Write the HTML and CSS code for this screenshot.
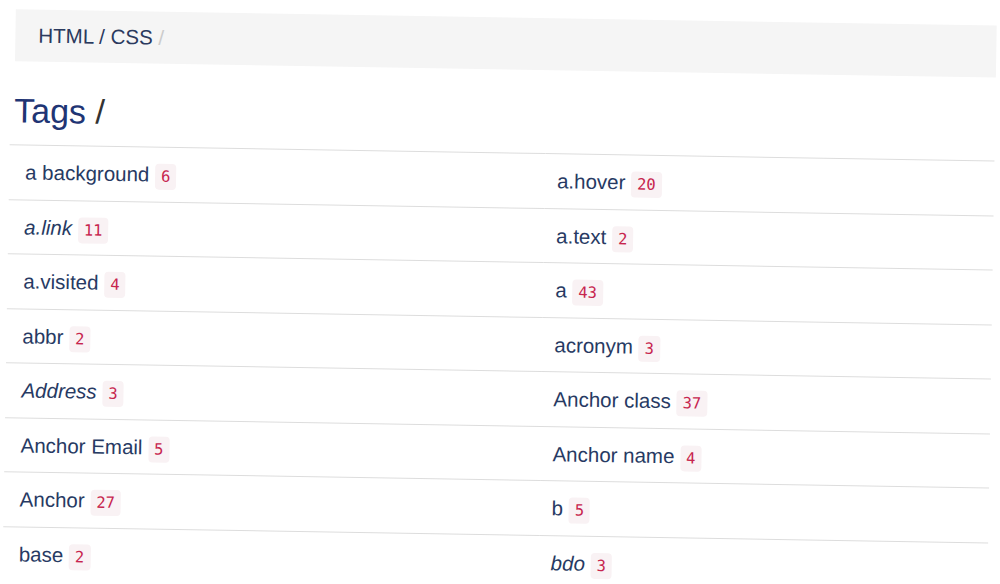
FILE: index.html
```html
<!DOCTYPE html>
<html lang="en">
<head>
<meta charset="utf-8">
<title>Tags</title>
<link rel="stylesheet" href="styles.css">
</head>
<body>
<div class="page">
  <nav class="breadcrumb">
    <a class="crumb" href="#">HTML</a> / <a class="crumb" href="#">CSS</a> <span class="sep">/</span>
  </nav>
  <h1 class="title"><span class="title-main">Tags</span> /</h1>
  <div class="tag-grid">
    <div class="tag-cell left"><a class="tag" href="#">a background</a> <code class="count">6</code></div>
    <div class="tag-cell right"><a class="tag" href="#">a.hover</a> <code class="count">20</code></div>
    <div class="tag-cell left"><a class="tag italic" href="#">a.link</a> <code class="count">11</code></div>
    <div class="tag-cell right"><a class="tag" href="#">a.text</a> <code class="count">2</code></div>
    <div class="tag-cell left"><a class="tag" href="#">a.visited</a> <code class="count">4</code></div>
    <div class="tag-cell right"><a class="tag" href="#">a</a> <code class="count">43</code></div>
    <div class="tag-cell left"><a class="tag" href="#">abbr</a> <code class="count">2</code></div>
    <div class="tag-cell right"><a class="tag" href="#">acronym</a> <code class="count">3</code></div>
    <div class="tag-cell left"><a class="tag italic" href="#">Address</a> <code class="count">3</code></div>
    <div class="tag-cell right"><a class="tag" href="#">Anchor class</a> <code class="count">37</code></div>
    <div class="tag-cell left"><a class="tag" href="#">Anchor Email</a> <code class="count">5</code></div>
    <div class="tag-cell right"><a class="tag" href="#">Anchor name</a> <code class="count">4</code></div>
    <div class="tag-cell left"><a class="tag" href="#">Anchor</a> <code class="count">27</code></div>
    <div class="tag-cell right"><a class="tag" href="#">b</a> <code class="count">5</code></div>
    <div class="tag-cell left"><a class="tag" href="#">base</a> <code class="count">2</code></div>
    <div class="tag-cell right"><a class="tag italic" href="#">bdo</a> <code class="count">3</code></div>
  </div>
</div>
</body>
</html>
```

FILE: styles.css
```css
html, body {
  margin: 0;
  padding: 0;
  background: #ffffff;
  overflow: hidden;
}

body {
  font-family: "Liberation Sans", Arial, sans-serif;
  color: #333333;
}

.page {
  width: 1000px;
  padding-top: 9px;
  transform: rotate(0.95deg);
  transform-origin: 0 0;
}

.breadcrumb {
  margin: 0 3px 0 16px;
  height: 52px;
  line-height: 52px;
  padding: 0 23px;
  background: #f5f5f5;
  font-size: 20.5px;
  color: #2b3a5e;
}

.crumb {
  color: #2b3a5e;
  text-decoration: none;
}

.sep {
  color: #cccccc;
}

.title {
  margin: 29px 0 14px 16px;
  font-size: 34px;
  line-height: 40px;
  font-weight: normal;
  color: #333333;
}

.title-main {
  color: #1f3574;
}

.tag-grid {
  display: grid;
  grid-template-columns: 536px 1fr;
  margin: 0 3px 0 12px;
}

.tag-cell {
  height: 54.5px;
  box-sizing: border-box;
  border-top: 1px solid #dddddd;
  padding: 13px 12px 0 16px;
  line-height: 28px;
  font-size: 20.5px;
  white-space: nowrap;
}

.tag-cell.right {
  padding-left: 12px;
}

.tag {
  color: #273a63;
  text-decoration: none;
}

.tag.italic {
  font-style: italic;
}

.count {
  font-family: "DejaVu Sans Mono", "Liberation Mono", monospace;
  font-size: 15.5px;
  line-height: 1;
  color: #c7254e;
  background: #f9f2f4;
  padding: 4px 6px;
  border-radius: 4px;
}
```
